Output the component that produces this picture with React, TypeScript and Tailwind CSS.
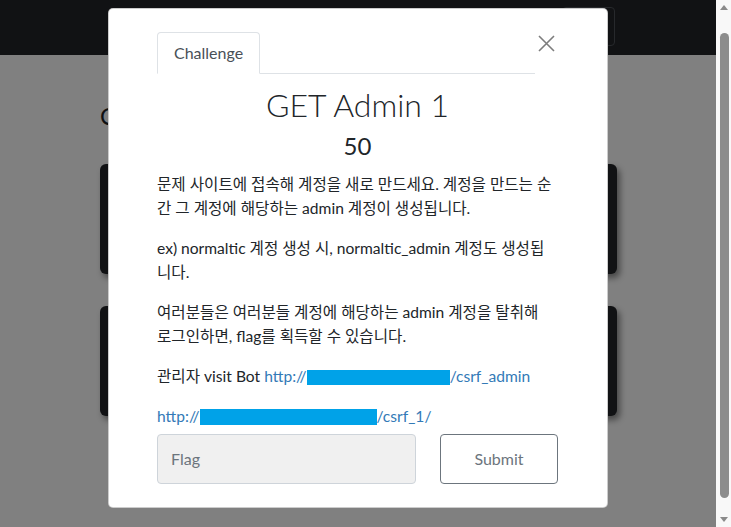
// Challenge modal over the dimmed challenge board
const font = "font-['Lato','Noto_Sans_CJK_KR',sans-serif]";

function Redacted({ w, h }: { w: string; h: string }) {
  return <span className={`inline-block bg-[#00a2e8] align-[-3px] ${w} ${h}`} />;
}

function ChallengeModal() {
  return (
    <div className={`absolute left-[108px] top-[8px] h-[500px] w-[500px] rounded-[5px] border border-black/20 bg-white pl-[48px] pr-[49px] pt-[23px] text-[#212529] ${font}`}>
      {/* Tabs + close */}
      <div className="flex items-start gap-[3px] pr-[3px]">
        <div className="flex flex-1 border-b border-[#dee2e6]">
          <div className="-mb-px rounded-t-[4px] border border-[#dee2e6] border-b-white bg-white px-4 py-2 text-[16px] leading-[24px] text-[#495057]">
            Challenge
          </div>
        </div>
        <button className="mt-[3px] h-[17px] w-[17px]">
          <svg viewBox="0 0 17 17" className="h-[17px] w-[17px]">
            <path d="M1 1 L16 16 M16 1 L1 16" stroke="#7d7d7d" strokeWidth="1.6" />
          </svg>
        </button>
      </div>

      <h2 className="mt-[12px] text-center text-[32px] font-light leading-[1.2]">GET Admin 1</h2>
      <h4 className="mt-[8px] text-center text-[24px] font-normal leading-[1.2]">50</h4>

      <div className="mt-[11px] text-[15.6px] leading-[24px]">
        <p className="mb-[16px] whitespace-nowrap">
          문제 사이트에 접속해 계정을 새로 만드세요. 계정을 만드는 순
          <br />
          간 그 계정에 해당하는 admin 계정이 생성됩니다.
        </p>
        <p className="mb-[16px] whitespace-nowrap">
          ex) normaltic 계정 생성 시, normaltic_admin 계정도 생성됩
          <br />
          니다.
        </p>
        <p className="mb-[16px] whitespace-nowrap">
          여러분들은 여러분들 계정에 해당하는 admin 계정을 탈취해
          <br />
          로그인하면, flag를 획득할 수 있습니다.
        </p>
        <p className="mb-[16px] whitespace-nowrap">
          관리자 visit Bot{" "}
          <a className="text-[#337ab7]">
            http://
            <Redacted w="w-[143px]" h="h-[15px]" />
            /csrf_admin
          </a>
        </p>
        <p className="whitespace-nowrap">
          <a className="text-[#337ab7]">
            http://
            <Redacted w="w-[177px]" h="h-[16px]" />
            /csrf_1/
          </a>
        </p>
      </div>

      <div className="mt-[6px] grid grid-cols-[259px_1fr] gap-[24px]">
        <div className="flex h-[50px] items-center rounded-[4px] border border-[#ced4da] bg-[#f0f0f0] px-[13px] text-[16px] text-[#6c757d]">
          Flag
        </div>
        <button className="h-[50px] rounded-[4px] border border-[#6c757d] bg-white text-[16px] text-[#6c757d]">
          Submit
        </button>
      </div>
    </div>
  );
}

function Scrollbar() {
  return (
    <div className="flex h-full w-[15px] flex-col bg-[#f8f8f8]">
      <div className="flex h-[15px] items-center justify-center">
        <svg viewBox="0 0 8 5" className="h-[5px] w-[8px]">
          <polygon points="4,0 8,5 0,5" fill="#8a8a8a" />
        </svg>
      </div>
      <div className="flex-1 pb-[14px] pl-[4px] pt-[18px]">
        <div className="h-full w-[9px] rounded-full bg-[#8c8c8c]" />
      </div>
      <div className="flex h-[15px] items-center justify-center">
        <svg viewBox="0 0 8 5" className="h-[5px] w-[8px]">
          <polygon points="0,0 8,0 4,5" fill="#8a8a8a" />
        </svg>
      </div>
    </div>
  );
}

export default function App() {
  return (
    <div className="flex h-[527px] w-[731px] overflow-hidden">
      <div className={`relative flex-1 bg-[#808080] ${font}`}>
        {/* Navbar */}
        <nav className="flex h-[55px] justify-end bg-[#111214] pr-[101px] pt-[7px]">
          <div className="h-[39px] w-[53px] rounded-[4px] border border-[#27292c]" />
        </nav>

        {/* Board */}
        <main className="w-[617px] pl-[100px] pt-[47px]">
          <h1 className="text-[24px] leading-[1.2] text-[#0f1012]">Challenges</h1>
          <div className="mt-[33px] flex flex-col gap-[32px]">
            <div className="h-[110px] rounded-[6px] bg-[#111214] shadow-[3px_4px_6px_rgba(0,0,0,0.45)]" />
            <div className="h-[110px] rounded-[6px] bg-[#111214] shadow-[3px_4px_6px_rgba(0,0,0,0.45)]" />
          </div>
        </main>

        <ChallengeModal />
      </div>
      <Scrollbar />
    </div>
  );
}
